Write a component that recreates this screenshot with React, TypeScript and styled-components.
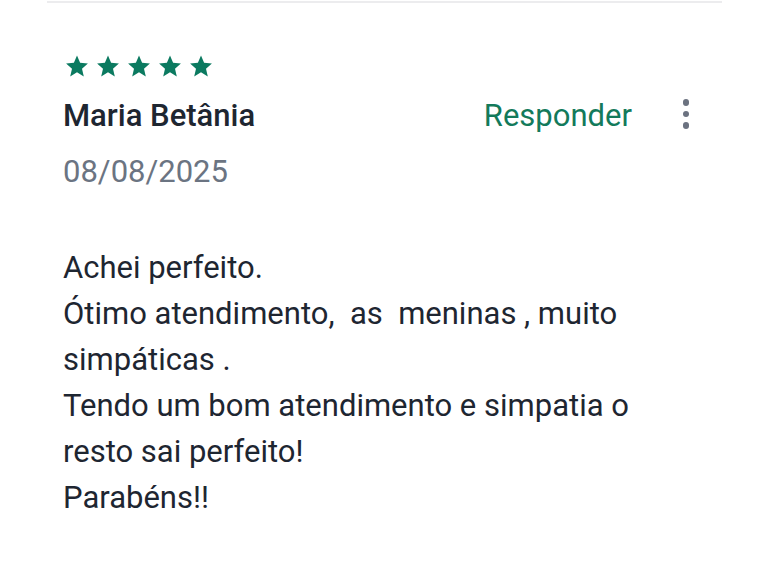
import React from 'react';
import styled, { createGlobalStyle } from 'styled-components';

const GlobalStyle = createGlobalStyle`
  html, body {
    margin: 0;
    padding: 0;
    background: #ffffff;
  }
  body {
    font-family: Roboto, "Noto Sans", "Liberation Sans", sans-serif;
    -webkit-font-smoothing: antialiased;
  }
`;

const Page = styled.div`
  width: 768px;
  height: 573px;
  overflow: hidden;
  background: #fff;
`;

const Divider = styled.div`
  margin: 1px 46px 0 47px;
  height: 2px;
  background: #ececee;
`;

const Review = styled.article`
  padding: 52px 0 0 63px;
`;

const Stars = styled.div`
  display: flex;
  gap: 7px;
  padding-left: 2px;
`;

const Header = styled.div`
  display: flex;
  align-items: center;
  margin-top: 18px;
  padding-right: 79px;
`;

const Name = styled.h2`
  flex: 1;
  margin: 0;
  font-size: 31px;
  line-height: 40px;
  font-weight: 500;
  color: #1e2631;
`;

const ReplyButton = styled.button`
  border: 0;
  background: none;
  padding: 0;
  font-family: inherit;
  font-size: 31px;
  line-height: 40px;
  color: #137a5b;
  margin-right: 51px;
  cursor: pointer;
`;

const MoreButton = styled.button`
  border: 0;
  background: none;
  padding: 0;
  width: 6px;
  margin-top: -4px;
  display: flex;
  flex-direction: column;
  align-items: center;
  gap: 5px;
  cursor: pointer;
`;

const Dot = styled.span`
  width: 6.5px;
  height: 6.5px;
  border-radius: 50%;
  background: #6b7280;
`;

const DateText = styled.div`
  margin-top: 16px;
  font-size: 31px;
  line-height: 40px;
  color: #6b7482;
`;

const Body = styled.p`
  margin: 53px 0 0;
  font-size: 31px;
  line-height: 46px;
  color: #1e2631;
  white-space: pre-wrap;
`;

const Star: React.FC = () => (
  <svg width="24" height="23" viewBox="0 0 24 23">
    <path
      d="M12 0.6l3.1 7.2 7.8.7-5.9 5.2 1.8 7.7L12 17.3l-6.8 4.1 1.8-7.7L1.1 8.5l7.8-.7z"
      fill="#0b7a60"
    />
  </svg>
);

const lines = [
  'Achei perfeito.',
  'Ótimo atendimento,  as  meninas , muito',
  'simpáticas .',
  'Tendo um bom atendimento e simpatia o',
  'resto sai perfeito!',
  'Parabéns!!',
];

export default function App() {
  return (
    <Page>
      <GlobalStyle />
      <Divider />
      <Review>
        <Stars>
          {[0, 1, 2, 3, 4].map((i) => (
            <Star key={i} />
          ))}
        </Stars>
        <Header>
          <Name>Maria Betânia</Name>
          <ReplyButton>Responder</ReplyButton>
          <MoreButton aria-label="Mais opções">
            <Dot />
            <Dot />
            <Dot />
          </MoreButton>
        </Header>
        <DateText>08/08/2025</DateText>
        <Body>{lines.join('\n')}</Body>
      </Review>
    </Page>
  );
}
